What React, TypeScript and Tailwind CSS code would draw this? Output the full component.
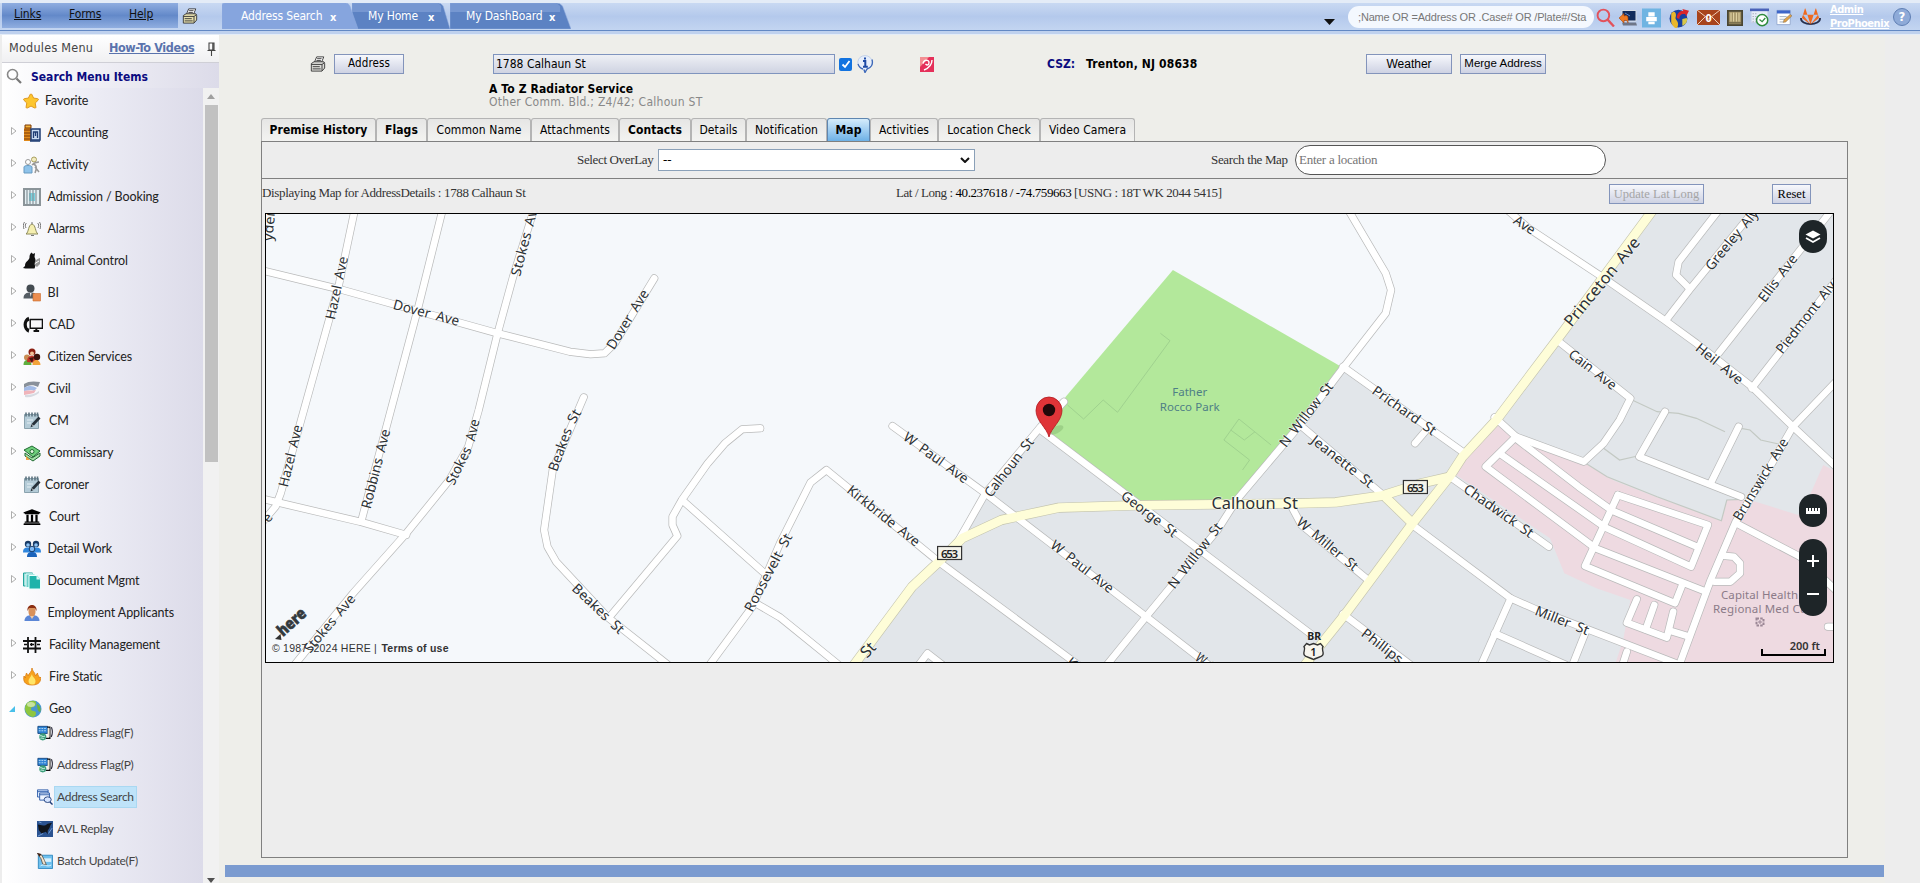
import React from "react";
import { FaStar, FaGitlab, FaUniversity } from "react-icons/fa";

/* ------------------------------------------------------------------ map */

const TILES: Record<string, { x: number; s: number }> = {
  A: { x: 260, s: 2.904 },
  B: { x: 780, s: 2.8 },
  C: { x: 1300, s: 2.8 },
};

const toPoints = (src: string): [number, number][] =>
  src.split(" ").map((p) => {
    const t = TILES[p[0]];
    const [x, y] = p.slice(1).split(",").map(Number);
    return [t.x + x / t.s, 210 + y / 3];
  });

const toAttr = (src: string) => toPoints(src).map((p) => p.map((n) => n.toFixed(1)).join(",")).join(" ");

const STREETS = [
  "A275,0 A230,220 A60,850 A45,890 A0,945",
  "A530,0 A460,290 A295,930",
  "A795,0 A735,200 A690,370 A635,600 A605,710 A550,810 A425,970 A270,1150 A100,1365",
  "A0,180 A240,240 A690,370 A900,425 A960,433 A1000,430 A1030,400 A1145,205",
  "A0,865 A290,935 A425,975",
  "A940,562 A850,780 A825,960 A835,1010 A860,1055 A1010,1222 A1185,1365",
  "A1453,655 A1400,658 A1350,700 A1300,760 A1225,870 A1198,920 A1198,945 A1212,978 A1020,1215",
  "A1228,872 A1460,1085",
  "A1440,1180 B0,1222 B165,1365",
  "A1305,1365 A1430,1190 B0,1000 B85,818 B130,780 B450,1060 B835,1365",
  "B795,575 B730,650 B575,850 B530,935 B490,1010",
  "B315,648 B575,850 B1025,1220 B1200,1365",
  "B730,660 B1490,1275",
  "C130,-10 C240,190 C255,240 C240,310 C120,475 B1456,645 B1280,868 B1225,960 B1025,1220 B915,1365",
  "C120,470 C455,725",
  "C350,665 C322,700",
  "B1456,645 C240,862",
  "B1430,885 B1460,945 C185,1105",
  "C315,945 C590,1165 C660,1198 C1065,1365",
  "C420,800 C697,1010",
  "C120,1212 C310,1365",
  "C590,1165 C507,1365",
  "C545,1270 C745,1365",
  "C800,1265 C763,1365",
  "C915,1325 C903,1365",
  "C570,-10 C640,55 C845,200 C1020,330 C1110,400 C1265,530 C1380,650 C1505,775",
  "C725,395 C925,565 C895,630 C850,700 C795,755 C605,680 C545,622",
  "C1025,330 C1090,240 C1280,-10",
  "C1090,235 C1053,195 C1060,155 C1180,-10",
  "C1172,430 C1500,-15",
  "C1265,535 C1505,205",
  "C1505,510 C1380,650 C1300,800 C1220,935 C1150,1110 C1062,1365",
  "C1022,605 C950,740 C1235,860",
  "C1228,650 C1150,820",
  "C605,680 C520,770 C815,1005",
  "C565,735 C845,945",
  "C610,690 C780,830 C865,895",
  "C890,855 C1142,945 C1095,1070 C850,950",
  "C870,900 C1112,1010",
  "C890,855 C798,1068 C1050,1180 C1072,1120",
  "C820,1012 C1130,1142",
  "C1185,1037 C1215,1040 C1232,1060 C1232,1090 C1205,1115 C1160,1115",
  "C943,1168 C915,1238 C1027,1283 C1045,1205",
  "C992,1185 C968,1258",
  "C1035,1262 C1090,1280",
  "C1222,940 C1400,1040 C1505,1145",
  "C1478,1250 C1510,1250",
  "B385,1370 B413,1330 B455,1365",
];

const MAIN_ROADS = [
  "C995,-10 C740,360 C550,630 C455,740 C420,798 C315,940 C125,1215 C50,1315 C10,1370",
  "C420,800 C340,820 C230,857 C100,877 C0,880 B1000,886 B780,893 B620,930 B510,985 B450,1050 B370,1130 B205,1368",
  "C240,862 C315,940",
];

const PATHS = [
  "C930,570 C1000,605 C1060,610 C1110,625 C1190,665",
  "C1235,655 C1260,660 C1290,690 C1340,702",
  "C850,715 C895,750 C945,738",
  "C800,760 C860,800 C1000,860 C1180,932 C1195,870 C1240,868",
];

const PARK_LINES = [
  "B1065,370 B1092,392 B945,607 B905,570 B850,627 B805,585",
  "B1375,705 B1285,627 B1243,690 B1315,750 B1295,780",
  "B1262,660 B1300,690 B1330,665",
];

type Label = [string, string, number?];
const LABELS: Label[] = [
  ["yder", "A22,92 A30,2"],
  ["Hazel Ave", "A203,328 A242,140"],
  ["Hazel Ave", "A67,830 A110,645"],
  ["Robbins Ave", "A307,895 A365,658"],
  ["Stokes Ave", "A741,197 A798,-25"],
  ["Stokes", "A551,822 A603,712"],
  ["Ave", "A610,692 A624,628"],
  ["Stokes Ave", "A135,1322 A268,1158"],
  ["Dover Ave", "A388,282 A578,334"],
  ["Dover Ave", "A1016,414 A1119,242"],
  ["Beakes", "A849,782 A893,655"],
  ["St", "A902,636 A922,600"],
  ["Beakes St", "A913,1128 A1052,1264"],
  ["Roosevelt St", "A1417,1202 A1535,973"],
  ["W Paul Ave", "B350,676 B524,810"],
  ["Kirkbride Ave", "B193,835 B387,1000"],
  ["Calhoun St", "B580,856 B702,688"],
  ["W Paul Ave", "B763,1000 B930,1140"],
  ["George St", "B960,852 B1108,972"],
  ["N Willow St", "B1094,1130 B1230,943"],
  ["N Willow St", "B1406,706 B1540,522"],
  ["Calhoun St", "B1208,880 B1450,880", 16],
  ["W Miller St", "C-4,930 C158,1074"],
  ["Jeanette St", "C36,685 C202,824"],
  ["St", "B232,1335 B260,1303", 16],
  ["Kirk", "B808,1350 B865,1400"],
  ["W Paul", "B1168,1337 B1250,1405"],
  ["Prichard St", "C207,537 C378,666"],
  ["Chadwick St", "C463,832 C650,973"],
  ["Princeton Ave", "C748,343 C942,88", 16],
  ["Cain Ave", "C757,427 C882,530"],
  ["Heil Ave", "C1113,408 C1236,514"],
  ["Greeley Aly", "C1142,175 C1275,2"],
  ["Ellis Ave", "C1291,271 C1384,138"],
  ["Piedmont Aly", "C1340,425 C1492,218"],
  ["Ave", "C602,26 C656,63"],
  ["Brunswick Ave", "C1222,928 C1357,688"],
  ["Miller St", "C660,1200 C808,1262"],
  ["Phillips", "C177,1264 C284,1352"],
];

function StreetLabel({ text, line, size = 13.8 }: { text: string; line: string; size?: number }) {
  const [[x1, y1], [x2, y2]] = toPoints(line);
  const angle = (Math.atan2(y2 - y1, x2 - x1) * 180) / Math.PI;
  return (
    <text
      transform={`translate(${x1.toFixed(1)} ${y1.toFixed(1)}) rotate(${angle.toFixed(1)})`}
      dy="0.35em"
      fontSize={size}
      wordSpacing="3"
      textLength={Math.hypot(x2 - x1, y2 - y1).toFixed(1)}
      lengthAdjust="spacingAndGlyphs"
    >
      {text}
    </text>
  );
}

function RouteShield({ x, y }: { x: number; y: number }) {
  return (
    <g>
      <rect x={x - 12} y={y - 6.5} width="24" height="13" fill="#f4f3ea" stroke="#333" strokeWidth="1.2" />
      <text x={x} y={y + 4.5} fontSize="11.5" textAnchor="middle" fontWeight="600" textLength="17">653</text>
    </g>
  );
}

function StreetMap() {
  return (
    <svg viewBox="266 214 1567 448" className="block h-full w-full font-['Noto_Sans','Open_Sans',sans-serif]">
      <rect x="260" y="210" width="1580" height="460" fill="#f5f8fb" />
      <polygon
        points={toAttr("B730,665 B575,850 B515,960 B440,1050 B365,1130 B200,1370 C1510,1370 C1510,-10 C985,-10 C740,360 C455,730 C125,470")}
        fill="#e2e6ea"
      />
      <polygon
        points={toAttr("C555,635 C640,690 C800,762 C880,812 C1000,862 C1180,932 C1195,870 C1260,870 C1395,915 C1430,850 C1465,765 C1510,790 C1510,1370 C880,1370 C905,1290 C925,1170 C830,1135 C740,1090 C700,985 C430,790")}
        fill="#eedae1"
      />
      <polygon points={toAttr("B1100,180 C112,468 B1280,870 B1010,872 B750,665 B800,560")} fill="#b3e89b" />
      <g fill="none" stroke="#a0d28f" strokeWidth="1">
        {PARK_LINES.map((p) => <polyline key={p} points={toAttr(p)} />)}
      </g>
      <g fill="none" stroke="#c3c9c3" strokeWidth="1.2">
        {PATHS.map((p) => <polyline key={p} points={toAttr(p)} />)}
      </g>
      <g fill="none" stroke="#b9baba" strokeWidth="8" strokeLinecap="round" strokeLinejoin="round">
        {STREETS.map((p) => <polyline key={p} points={toAttr(p)} />)}
      </g>
      <g fill="none" stroke="#c4c4ae" strokeWidth="10" strokeLinejoin="round">
        {MAIN_ROADS.map((p) => <polyline key={p} points={toAttr(p)} />)}
      </g>
      <g fill="none" stroke="#ffffff" strokeWidth="6.6" strokeLinecap="round" strokeLinejoin="round">
        {STREETS.map((p) => <polyline key={p} points={toAttr(p)} />)}
      </g>
      <g fill="none" stroke="#fefdd8" strokeWidth="8.8" strokeLinejoin="round">
        {MAIN_ROADS.map((p) => <polyline key={p} points={toAttr(p)} />)}
      </g>
      <g fill="#2c3134" stroke="#ffffff" strokeOpacity="0.6" strokeWidth="1.4" paintOrder="stroke">
        {LABELS.map(([t, l, s]) => <StreetLabel key={t + l} text={t} line={l} size={s} />)}
        <text x="264" y="522" fontSize="13.5" transform="rotate(-55 268 518)">e</text>
      </g>
      <g fill="#4f7f86" fontSize="11.5" textAnchor="middle">
        <text x="1189.7" y="396" textLength="35">Father</text>
        <text x="1189.7" y="411" textLength="60">Rocco Park</text>
      </g>
      <g fill="#8b7a88" fontSize="11.5">
        <text x="1721" y="598.5" textLength="77">Capital Health</text>
        <text x="1713" y="613" textLength="96">Regional Med Ctr</text>
        <path d="M1756.5 618.5h7v7h-7z" fill="#eedae1" stroke="#9b8796" strokeWidth="2" strokeDasharray="2.5 1.2" />
        <path d="M1760 620v4M1758 622h4" stroke="#9b8796" strokeWidth="1" />
      </g>
      <g fill="#222">
        <RouteShield x={949.6} y={553} />
        <RouteShield x={1415.4} y={487} />
        <text x="1314.3" y="640" fontSize="10.5" fontWeight="700" textAnchor="middle">BR</text>
        <path
          d="M1306.500 643.500l3 1.500 4-1.500 4 1.500 3-1.500 2.500 3c-2 3 1 5 0 8-1 3-7 3-9.500 5-2.500-2-8.500-2-9.500-5-1-3 2-5 0-8z"
          fill="#f7f5ee"
          stroke="#333"
          strokeWidth="1.4"
        />
        <text x="1313.3" y="656" fontSize="11" fontWeight="600" textAnchor="middle">1</text>
      </g>
      <ellipse cx="1056" cy="430" rx="8" ry="3.5" fill="#6a9a5a" opacity="0.3" transform="rotate(-25 1056 430)" />
      <path d="M1049 437c-2-9-13-16-13-26.500a13 13.500 0 0 1 26 0c0 10.500-11 17.500-13 26.500z" fill="#df3438" stroke="#b3191f" strokeWidth="0.8" />
      <circle cx="1049" cy="410" r="6.2" fill="#20080a" />
      <path d="M275 639l5.500-5 1 6z" fill="#333" />
      <text
        transform="translate(283 637) rotate(-42)"
        fontSize="16"
        fontWeight="900"
        fill="#333a3e"
        stroke="#333a3e"
        strokeWidth="0.6"
        textLength="33"
        lengthAdjust="spacingAndGlyphs"
      >
        here
      </text>
      <text x="272" y="652" fontSize="10.5" fill="#333" fontFamily="Liberation Sans">
        <tspan textLength="108">© 1987–2024 HERE | </tspan>
        <tspan x="381.5" fontWeight="700" textLength="67">Terms of use</tspan>
      </text>
    </svg>
  );
}

function MapControls() {
  return (
    <>
      <div className="absolute top-[6px] right-[6px] flex h-[33px] w-7 items-center justify-center rounded-full bg-[#1e2528]">
        <svg viewBox="0 0 16 14" className="h-3.5 w-4">
          <path d="M8 0.500l7.500 4L8 8.500 0.500 4.500z" fill="#fff" />
          <path d="M1 8l7 4 7-4" fill="none" stroke="#fff" strokeWidth="1.8" />
        </svg>
      </div>
      <div className="absolute top-[280px] right-[6px] flex h-[33px] w-7 items-center justify-center rounded-full bg-[#1e2528]">
        <svg viewBox="0 0 16 8" className="h-2 w-4">
          <path d="M1 1v6h14V1z" fill="#fff" />
          <path d="M3.500 0v4M6.500 0v4M9.500 0v4M12.500 0v4" stroke="#1e2528" />
        </svg>
      </div>
      <div className="absolute top-[325px] right-[6px] flex h-[77px] w-7 flex-col items-center justify-between rounded-[14px] bg-[#1e2528] py-4">
        <svg viewBox="0 0 12 12" className="h-3 w-3"><path d="M6 0v12M0 6h12" stroke="#fff" strokeWidth="2" /></svg>
        <svg viewBox="0 0 12 12" className="h-3 w-3"><path d="M0 6h12" stroke="#fff" strokeWidth="2" /></svg>
      </div>
      <div className="absolute right-[7px] bottom-[6px] flex h-[7px] w-[65px] items-end justify-end border-x-2 border-b-2 border-black pr-1 pb-[3px] font-['Noto_Sans',sans-serif] text-[11px] leading-[11px] font-semibold text-[#333]">
        200 ft
      </div>
    </>
  );
}

/* ---------------------------------------------------------------- icons */

function Svg({ children, className = "h-[18px] w-[18px]" }: { children: React.ReactNode; className?: string }) {
  return <svg viewBox="0 0 18 18" className={`${className} shrink-0`}>{children}</svg>;
}

const Printer = ({ tone = "#e9e6cf" }: { tone?: string }) => (
  <Svg className="h-4 w-4">
    <path d="M5 7l2.500-6h8l-2.500 6z" fill="#fff" stroke="#333" />
    <path d="M1.500 8.500l3-2h11l1 2v5l-3 3.500h-12z" fill={tone} stroke="#333" />
    <path d="M1.500 9.500h12v7M13.500 9.500l3-2M3 12h8M3 14.500h9M8 3h5M7.200 5h5" stroke="#333" fill="none" />
  </Svg>
);

const Notepad = () => (
  <Svg>
    <path d="M1.500 2.500h14v14h-14z" fill="#b4cbd7" stroke="#8aa2ae" />
    <path d="M3 0.500v4M6 0.500v4M9 0.500v4M12 0.500v4M14.500 0.500v4" stroke="#5d7480" strokeWidth="1.6" />
    <path d="M4 8h6M4 11h4" stroke="#e6f0f5" />
    <path d="M7.500 15.500l1-3.500 7-7.500 2 2-7 7.500z" fill="#27313a" />
    <path d="M9 12.500l1.500 1.500" stroke="#fff" />
  </Svg>
);

const AddressFlag = () => (
  <Svg className="h-4 w-4">
    <path d="M1 1.500h11v8H1z" fill="#2d83d4" stroke="#12457f" />
    <path d="M2 4h9M2 6.500h9" stroke="#bfe0fa" strokeDasharray="2 1" />
    <path d="M11.500 2.500h3V15H10" fill="none" stroke="#111" strokeWidth="1.4" />
    <path d="M12 3.500h2v10h-2z" fill="#f4ead6" />
    <path d="M16.300 2.500c1.200 3.500 1.200 8-.3 11" fill="none" stroke="#223" strokeWidth="1.2" />
    <circle cx="6.500" cy="13.300" r="4" fill="#3c9d7a" />
    <path d="M3 12.500c2-2 3 2 6 0M4 15c2-1 3 1 4 0" stroke="#e2fff4" fill="none" />
  </Svg>
);

const ICONS: Record<string, React.ReactNode> = {
  favorite: <FaStar className="h-4 w-4 fill-[#fdc62f] stroke-[#d98c10] stroke-[30px]" />,
  accounting: (
    <Svg>
      <path d="M1 4h7v13H1z" fill="#e08a1c" />
      <path d="M2 1h6v3H2zM1 6h7M1 9h7M1 12h7M1 15h7" stroke="#7d3a06" fill="#f5b53c" />
      <path d="M8 5h9v11H8z" fill="#c9dcf2" stroke="#1e3c73" strokeWidth="1.5" />
      <path d="M10.500 14V8h4v6M12.500 8v4M7 17h10" stroke="#1e3c73" fill="none" strokeWidth="1.3" />
    </Svg>
  ),
  activity: (
    <Svg>
      <circle cx="5" cy="6" r="2.500" fill="#fff" stroke="#999" />
      <circle cx="11" cy="3.500" r="2.500" fill="#f3ecc0" stroke="#a99f60" />
      <path d="M1 17v-6c0-2 8-2 8 0v6z" fill="#8fc3ea" stroke="#6699c0" />
      <path d="M9 9c2-2 4-3 7-3M10 8c4 1 4 4 2 9M12 11l4 5" stroke="#999" fill="none" strokeWidth="1.5" />
    </Svg>
  ),
  admission: (
    <Svg>
      <path d="M1 1h16v16H1z" fill="#e3eef2" stroke="#8b9499" strokeWidth="2" />
      <path d="M6 5h6v8H6z" fill="#79d3e0" />
      <path d="M4 1v16M7 1v16M10 1v16M13 1v16" stroke="#87949a" strokeWidth="1.2" />
    </Svg>
  ),
  alarms: (
    <Svg>
      <path d="M3 14c3-2 2-9 6-10 4 1 3 8 6 10z" fill="#f5efb0" stroke="#8d8a5a" />
      <path d="M8 15.500h3M9 2v2M3.500 3C2 4 2 6 3 8M1.500 2C0 4 0 7 1 9M14.500 3c1.500 1 1.500 3 .5 5M16.500 2c1.500 2 1.500 5 .5 7" stroke="#777" fill="none" />
    </Svg>
  ),
  animal: (
    <Svg>
      <path d="M8.500 0.500l1.500 1.500 2-1-.5 4c1.500 2 1.500 8 0 11.500H2.500L0 16l2-2c0-5 4-5 4.500-8.500C6.500 3 7 2 8.500 0.500z" fill="#111" />
      <path d="M11.500 13c0-4 2-6 5.500-7v6l-3 3z" fill="#9a9a9a" />
      <path d="M12 11.500l4-2.500" stroke="#fff" />
    </Svg>
  ),
  bi: (
    <Svg>
      <circle cx="7.500" cy="4.500" r="4" fill="#444b51" />
      <path d="M0.500 14.500c0-5 3-6 7-6s6 1 6 6z" fill="#555d64" />
      <path d="M7 9l.7 4 .8-4z" fill="#fff" />
      <path d="M10 9.500h7.500v7.500H10z" fill="#ec8d4f" stroke="#c96b2d" strokeWidth="0.6" />
    </Svg>
  ),
  cad: (
    <Svg className="h-5 w-5">
      <path d="M5 1.500C-1 4 -1 13 5 16l.8-3.500-1.800-1c-.8-2-.8-4 0-5.500l1.800-1z" fill="#111" />
      <path d="M6.500 4h11v8h-11z" fill="none" stroke="#111" strokeWidth="1.3" />
      <path d="M9.500 14.500h5M12 12v2" stroke="#111" strokeWidth="1.8" />
    </Svg>
  ),
  citizen: (
    <Svg>
      <circle cx="4" cy="9.500" r="3" fill="#c98d54" />
      <path d="M0.500 17c0-4 2-5 4-5s4 2 4 5z" fill="#5fae3e" />
      <circle cx="9" cy="4" r="3.500" fill="#8b1f12" />
      <circle cx="9" cy="5.500" r="2" fill="#f2c49a" />
      <path d="M4 14c0-5 2-6 5-6s6 2 6 7z" fill="#c4342a" />
      <circle cx="14" cy="9" r="3.200" fill="#3a130d" />
      <path d="M9.500 17c0-4 2-5 4-5s4 2 4 5z" fill="#f2a33a" />
      <path d="M6 10l3 5 2-6z" fill="#4a1710" />
    </Svg>
  ),
  civil: (
    <Svg>
      <path d="M1 4c4-3 10-3 16-2l-2 5C10 4 5 5 1 8z" fill="#89909a" />
      <path d="M1 8c5-3 9-2 13 0l-3 3c-3-2-6 0-10 0z" fill="#a3bbe6" />
      <path d="M1 11c5-1 8 0 12-1l-2 3c-3 1-6 1-10 2z" fill="#f0b4ba" />
      <path d="M2 15c5 0 10-1 14-4v2c-4 3-9 5-14 4z" fill="#d7dbe2" />
    </Svg>
  ),
  cm: <Notepad />,
  commissary: (
    <Svg>
      <path d="M1 6l8-4 8 5-7 6z" fill="#6fcf7c" stroke="#216b32" />
      <path d="M2 9l7 5 8-5v3l-7 5-8-5z" fill="#a4e0a7" stroke="#216b32" />
      <circle cx="9" cy="7.500" r="2" fill="#e4f7e0" stroke="#216b32" />
      <path d="M3 12l4 4H3z" fill="#f0a64a" />
    </Svg>
  ),
  court: <FaUniversity className="h-[18px] w-[18px] text-black" />,
  detail: (
    <Svg>
      <circle cx="5" cy="4" r="3.200" fill="#173a66" />
      <circle cx="13" cy="4" r="3.200" fill="#173a66" />
      <circle cx="5" cy="5" r="1.800" fill="#8fc4f5" />
      <circle cx="13" cy="5" r="1.800" fill="#8fc4f5" />
      <path d="M0 12.500c0-5 3-5 5-5s5 0 5 5z" fill="#2f86dd" />
      <path d="M8 12.500c0-5 3-5 5-5s5 0 5 5z" fill="#2f86dd" />
      <circle cx="9" cy="9" r="2.800" fill="#7fb8f2" stroke="#173a66" />
      <path d="M4 17c0-4 2-5 5-5s5 1 5 5z" fill="#1b63bb" />
    </Svg>
  ),
  document: (
    <Svg>
      <path d="M0.500 1h9v13h-9z" fill="#9fe0dc" stroke="#23a59d" />
      <path d="M3 2h9v13.500H3z" fill="#6bcfc9" stroke="#eafffd" />
      <path d="M6 3.500h8l3.500 3.500v10H6z" fill="#1fb3aa" stroke="#eafffd" />
      <path d="M13.500 3.500V7.500h4z" fill="#d6f5f3" />
    </Svg>
  ),
  employment: (
    <Svg>
      <path d="M1.500 17c0-4 3-6 7.500-6s7.500 2 7.500 6z" fill="#5b86d6" />
      <path d="M5.500 4h7v4c0 6-7 6-7 0z" fill="#d9915a" />
      <path d="M4.500 7c-1-8 10-8 9 0l-1.500-3H6z" fill="#8c2e12" />
      <path d="M7 12l2 3 2-3z" fill="#f0c9a4" />
    </Svg>
  ),
  facility: (
    <Svg>
      <path d="M5 1v16M12.500 1v16M0 5h18M0 12.500h18" stroke="#111" strokeWidth="1.8" />
      <path d="M1 8.500h3M7 8.500h4M14 8.500h3M8.500 7v3" stroke="#111" strokeWidth="1.4" />
    </Svg>
  ),
  fire: (
    <Svg>
      <path d="M9 0c0 3 3 4 3.500 8l2-3c0 2 1.500 3 2 5l1-1c.5 4-1 8-8.500 8S0 13 1 8l1.500 2C2 8 3 7 3.500 5l1.500 3c1-3 4-4 4-8z" fill="#f7a21d" stroke="#d97c12" strokeWidth="0.8" />
      <path d="M9 6c0 3 3.500 4 3.500 7S11 16.500 9 16.500 5.500 15.500 5.500 13 8 9 9 6z" fill="#ffe568" />
    </Svg>
  ),
  geo: (
    <Svg>
      <circle cx="9" cy="9" r="8.500" fill="#4a97cf" />
      <path d="M3 3c4-3 10-3 9 1s-5 2-5 5 5 1 5 4-2 4-4 4C1 15-1 8 3 3z" fill="#8ec63f" />
      <path d="M13 4c4 2 4 6 3 8-2 0-3-4-3-8z" fill="#6db33a" />
      <ellipse cx="7" cy="4.500" rx="4" ry="2.500" fill="#fff" opacity="0.5" />
    </Svg>
  ),
  search: (
    <Svg className="h-4 w-4">
      <path d="M0.500 1h12v8h-12z" fill="#dcebff" stroke="#2455a5" />
      <path d="M3 4.500h11v8H3z" fill="#eef5ff" stroke="#2455a5" />
      <path d="M0.500 3h12M3 6.500h11" stroke="#2455a5" />
      <ellipse cx="12" cy="12" rx="4" ry="3.200" fill="#d5e4ff" stroke="#1d3c78" />
      <path d="M14.500 14.500l3 3" stroke="#1d3c78" strokeWidth="1.6" />
    </Svg>
  ),
  avl: (
    <Svg className="h-4 w-4">
      <path d="M0 0h18v18H0z" fill="#2b5391" />
      <path d="M1 4c4 1 8 2 11-1l5-1-2 3-1 3-2 3v4l-2-3-5 2-3-4z" fill="#10151d" />
      <path d="M1 17l6-3M13 14l4-6M2 1l3 1" stroke="#7aa3da" />
    </Svg>
  ),
  batch: (
    <Svg className="h-4 w-4">
      <path d="M1.500 2.500h16v15h-16z" fill="#6fc0ee" stroke="#2b86bf" />
      <path d="M6 6h10v4H6z" fill="#d8f1fd" />
      <path d="M0.500 0.500l5 2 3 6 2 5-4-1-2-6z" fill="#f1e3cf" stroke="#3b2b1d" strokeWidth="0.7" />
      <path d="M0 0l5 1-2 3z" fill="#3b1d12" />
      <path d="M4 14.500c4-3 7 2 12-1" stroke="#eafaff" fill="none" />
    </Svg>
  ),
};

type Item = { label: string; icon: string; arrow?: boolean; wide?: boolean; near?: boolean };
const MODULES: Item[] = [
  { label: "Favorite", icon: "favorite", near: true },
  { label: "Accounting", icon: "accounting", arrow: true },
  { label: "Activity", icon: "activity", arrow: true },
  { label: "Admission / Booking", icon: "admission", arrow: true },
  { label: "Alarms", icon: "alarms", arrow: true },
  { label: "Animal Control", icon: "animal", arrow: true },
  { label: "BI", icon: "bi", arrow: true },
  { label: "CAD", icon: "cad", arrow: true, wide: true },
  { label: "Citizen Services", icon: "citizen", arrow: true },
  { label: "Civil", icon: "civil", arrow: true },
  { label: "CM", icon: "cm", arrow: true, wide: true },
  { label: "Commissary", icon: "commissary", arrow: true },
  { label: "Coroner", icon: "cm", near: true },
  { label: "Court", icon: "court", arrow: true, wide: true },
  { label: "Detail Work", icon: "detail", arrow: true },
  { label: "Document Mgmt", icon: "document", arrow: true },
  { label: "Employment Applicants", icon: "employment" },
  { label: "Facility Management", icon: "facility", arrow: true, wide: true },
  { label: "Fire Static", icon: "fire", arrow: true, wide: true },
];

const GEO_ITEMS = [
  { label: "Address Flag(F)", icon: <AddressFlag /> },
  { label: "Address Flag(P)", icon: <AddressFlag /> },
  { label: "Address Search", icon: ICONS.search, active: true },
  { label: "AVL Replay", icon: ICONS.avl },
  { label: "Batch Update(F)", icon: ICONS.batch },
];

/* -------------------------------------------------------------- sidebar */

function Sidebar() {
  return (
    <aside className="ml-0.5 flex w-[217px] shrink-0 flex-col overflow-hidden bg-[#f1f1f1]">
      <div className="flex h-[27px] shrink-0 items-center bg-linear-to-b from-white to-[#f0f0f2] pl-[7px] font-['DejaVu_Sans_Condensed','DejaVu_Sans',sans-serif] text-[12.5px] whitespace-nowrap">
        <span className="w-[100px] tracking-[0.25px] text-[#444]">Modules Menu</span>
        <span className="w-[98px] font-bold tracking-[-0.4px] text-[#5a73ad] underline">How-To Videos</span>
        <svg viewBox="0 0 9 14" className="h-3.5 w-[9px]">
          <path d="M2 1h5v7H2zM0.500 8.500h8M4.500 8.500V14" fill="none" stroke="#444" strokeWidth="1.1" />
          <path d="M6 1v7" stroke="#444" strokeWidth="1.5" />
        </svg>
      </div>
      <div className="flex h-[26px] shrink-0 items-center border-t border-[#cfcfd6] bg-linear-to-r from-white to-[#dcdbe9] pl-1">
        <svg viewBox="0 0 16 16" className="h-4 w-4">
          <circle cx="6.500" cy="6.500" r="5" fill="none" stroke="#888" strokeWidth="1.6" />
          <path d="M10.500 10.500l4.500 4.500" stroke="#777" strokeWidth="2.2" />
        </svg>
        <span className="mt-0.5 ml-[9px] font-['DejaVu_Sans_Condensed','DejaVu_Sans',sans-serif] text-[12px] font-bold whitespace-nowrap text-[#0b0b80]">
          Search Menu Items
        </span>
      </div>
      <div className="flex min-h-0 flex-1">
        <nav className="w-[201px] shrink-0 bg-linear-to-r from-white via-[#ebebf4] to-[#dcdbe9] font-['Lato',sans-serif] text-[12.5px] tracking-[-0.12px] text-[#222]">
          <ul className="-mt-[3px]">
            {MODULES.map((m) => (
              <li key={m.label} className="flex h-8 items-center pl-[9px]">
                <span className="w-3 shrink-0">
                  {m.arrow && (
                    <svg viewBox="0 0 6 8" className="mb-1 h-2 w-1.5"><path d="M0.500 0.500L5 4 0.500 7.500z" fill="#fff" stroke="#999" strokeWidth="0.8" /></svg>
                  )}
                </span>
                <span className={`flex shrink-0 ${m.near ? "w-[22px]" : m.wide ? "w-[26px]" : "w-[24.5px]"}`}>{ICONS[m.icon]}</span>
                <span className="whitespace-nowrap">{m.label}</span>
              </li>
            ))}
            <li>
              <div className="flex h-8 items-center pl-[7px]">
                <svg viewBox="0 0 6 6" className="mr-[9px] h-1.5 w-1.5"><path d="M6 0v6H0z" fill="#49c0ea" /></svg>
                <span className="w-[25px]">{ICONS.geo}</span>
                <span>Geo</span>
              </div>
              <ul className="-mt-2 text-[12px] tracking-[-0.28px] text-[#444]">
                {GEO_ITEMS.map((g) => (
                  <li key={g.label} className="flex h-8 items-center pl-[35px]">
                    {g.icon}
                    <span className={`ml-px border px-0.5 py-0.5 leading-4 whitespace-nowrap ${g.active ? "border-[#a9d8f2] bg-[#bfe3f9]" : "border-transparent"}`}>
                      {g.label}
                    </span>
                  </li>
                ))}
              </ul>
            </li>
          </ul>
        </nav>
        <div className="flex w-4 flex-col items-center">
          <span className="flex h-[17px] items-center"><svg viewBox="0 0 8 5" className="h-[5px] w-2"><path d="M0 5l4-5 4 5z" fill="#a0a0a0" /></svg></span>
          <span className="h-[357px] w-[13px] bg-[#c1c1c1]" />
          <span className="mt-auto"><svg viewBox="0 0 8 5" className="h-[5px] w-2"><path d="M0 0l4 5 4-5z" fill="#505050" /></svg></span>
        </div>
      </div>
    </aside>
  );
}

/* -------------------------------------------------------------- top bar */

function WindowTab({ label, active, className, close = "w-[22px]" }: { label: string; active?: boolean; className: string; close?: string }) {
  return (
    <div className={`relative flex h-[26px] items-center text-[12px] tracking-[-0.15px] whitespace-nowrap text-white ${className}`}>
      <svg viewBox="0 0 100 26" preserveAspectRatio="none" className="absolute inset-0 h-full w-full">
        <path d={active ? "M0 26V2q0-2 2-2H91q2 0 3 3L100 26z" : "M0 26V0H88q3 0 5 3L100 26z"} fill={active ? "#86a5de" : "#5c82c3"} stroke="#8fabdf" strokeWidth="0.5" />
        {!active && <path d="M0 0H88l3 3v6H0z" fill="#87a5da" opacity="0.6" />}
      </svg>
      <span className="relative flex-1">{label}</span>
      <span className={`relative mt-1 text-[11px] font-bold ${close}`}>x</span>
    </div>
  );
}

function TopBar() {
  return (
    <header className="flex h-[35px] shrink-0 flex-col bg-[#e4ecf7] pt-[3px] font-['DejaVu_Sans_Condensed','DejaVu_Sans',sans-serif]">
      <div className="flex h-7 items-start border-b border-[#6288c4] bg-linear-to-b from-[#c9d9f2] via-[#b4c9ec] to-[#c3d5f1]">
        <div className="ml-0.5 flex h-[25px] w-[176px] items-center bg-linear-to-b from-[#8fade0] via-[#6389c9] to-[#90aee0] pb-[3px] text-[12px] tracking-[-0.1px] text-[#111] underline">
          <span className="w-[55px] pl-3">Links</span>
          <span className="w-[60px] pl-3">Forms</span>
          <span className="pl-3">Help</span>
        </div>
        <div className="ml-1 flex h-[25px] w-10 items-center"><Printer tone="#e6dfae" /></div>
        <WindowTab active label="Address Search" className="z-10 w-[136px] pl-[19px]" close="w-7" />
        <WindowTab label="My Home" className="-ml-1.5 w-[98px] pl-4" />
        <WindowTab label="My DashBoard" className="w-[121px] pl-4" />
        <div className="ml-auto flex h-[27px] items-center pr-[9px]">
          <svg viewBox="0 0 11 6" className="mt-2.5 mr-[13px] h-1.5 w-[11px]"><path d="M0 0h11L5.500 6z" fill="#111" /></svg>
          <div className="flex h-[22px] w-[246px] items-center overflow-hidden rounded-full bg-[#f4f8fe] px-2.5 pt-0.5 font-['Liberation_Sans',sans-serif] text-[11px] tracking-[-0.18px] whitespace-nowrap text-[#777]">
            ;Name OR =Address OR .Case# OR /Plate#/Sta
          </div>
          <div className="flex items-center pt-0.5">
            <Svg className="mr-1 ml-0.5 h-[19px] w-[19px]"><circle cx="7" cy="7" r="5.500" fill="none" stroke="#e2525b" strokeWidth="1.8" /><path d="M11 11l6 6.500" stroke="#e2525b" strokeWidth="2.2" /></Svg>
            <Svg className="mr-[5px] h-[18px] w-[18px]">
              <path d="M3 1.500h14v10.500H3z" fill="#122c5c" stroke="#d6dce4" />
              <path d="M6 4l5 3" stroke="#5c86c9" />
              <path d="M3 13.500h14l1 3H4z" fill="#6e7688" />
              <path d="M0 9l5-4.500v2.500c3-1 4 0 4 2v5c0-2-2-3-4-2.500V14z" fill="#f07a22" stroke="#a8450c" strokeWidth="0.6" />
            </Svg>
            <Svg className="mr-2 h-5 w-[19px]">
              <path d="M0 0h18v18H0z" fill="#6fb4e2" />
              <path d="M6 3.500h6v4H6zM4 8h10v4H4zM6 12.500h6v2.500H6z" fill="#fff" />
            </Svg>
            <Svg className="mr-2 h-5 w-5"><circle cx="8.500" cy="9.500" r="8" fill="#173fa0" /><path d="M2 5c3-4 5 0 4 3s3 3 2 8-5 0-6-3z" fill="#e8b62b" /><path d="M12 10l4-1c1 3-1 6-4 7z" fill="#d8c84a" /><path d="M7 9c0-5 4-7 6-6l-1-2 6 1.500-2.500 5-1-2C11 5 9 7 9.500 10z" fill="#d9252a" /></Svg>
            <svg viewBox="0 0 23 15" className="mr-[7px] h-[15px] w-[23px]">
              <path d="M0 0h23v15H0z" fill="#a8441c" />
              <path d="M0 0l11.500 9L23 0M0 15l8-8M23 15l-8-8" stroke="#f0d0b8" fill="none" />
              <text x="8.500" y="12" fontSize="10" fontWeight="700" fill="#fff">0</text>
            </svg>
            <Svg className="mr-[7px] h-[16px] w-[16px]"><path d="M1 1h16v16H1z" fill="#a39367" stroke="#4a4633" strokeWidth="2" /><path d="M4.500 3v10M7.500 3v10M10.500 3v10M13.500 3v10" stroke="#f1e5b5" /><path d="M2 14.500h14" stroke="#5d563c" /></Svg>
            <Svg className="mr-[7px] h-[19px] w-[19px]"><path d="M1 2h16v12H1z" fill="#e6ecf8" stroke="#c4cfe8" /><path d="M0 0.500h18v2.500H0z" fill="#4a62b8" /><path d="M3 5v9M5.500 5v9" stroke="#99a" strokeDasharray="1 1.5" /><circle cx="11.500" cy="11.500" r="5.300" fill="#fff" stroke="#2e8b3c" strokeWidth="1.4" /><path d="M9 11l2.500 2 3-3.500" stroke="#2e8b3c" fill="none" strokeWidth="1.2" /></Svg>
            <Svg className="mr-2 h-[17px] w-4"><path d="M1 1h15v16H1z" fill="#fff" stroke="#93a8d0" /><path d="M1 1h15v3.500H1z" fill="#3d66c9" /><path d="M4 8h8M4 11h6M4 14h4" stroke="#9ab" /><path d="M8 14.500l1-3 7-6 2 1.500-7 7z" fill="#e0a248" stroke="#6b5a48" strokeWidth="0.5" /></Svg>
            <span className="relative mr-[9px] flex h-[19px] w-[21px] justify-center">
              <svg viewBox="0 0 21 8" className="absolute bottom-0.5 left-0 h-2 w-[21px]"><path d="M1 1c-1 8 20 8 19 0" fill="none" stroke="#27314f" strokeWidth="1.8" /></svg>
              <FaGitlab className="relative h-[17px] w-[17px] text-[#ee6a20]" />
            </span>
          </div>
          <div className="w-[63px] text-[11px] leading-[14px] font-bold tracking-[-0.45px] text-white underline">
            Admin<br />ProPhoenix
          </div>
          <span className="flex h-[18px] w-[18px] items-center justify-center rounded-full border border-[#5f7fb4] bg-[#8eaad8] text-[13px] font-bold text-white">?</span>
        </div>
      </div>
      <div className="h-[3px] bg-[#bfd1ee]" />
    </header>
  );
}

/* --------------------------------------------------------------- content */

const BUTTON = "flex items-center justify-center border border-[#8394bb] bg-linear-to-b from-[#f7f8fc] to-[#ced2e3] whitespace-nowrap";

const TABS = [
  { label: "Premise History", width: "w-[115px]", bold: true },
  { label: "Flags", width: "w-[51px]", bold: true },
  { label: "Common Name", width: "w-[104px]" },
  { label: "Attachments", width: "w-[88px]" },
  { label: "Contacts", width: "w-[72px]", bold: true },
  { label: "Details", width: "w-[55px]" },
  { label: "Notification", width: "w-[81px]" },
  { label: "Map", width: "w-[43px]", bold: true, active: true },
  { label: "Activities", width: "w-[68px]" },
  { label: "Location Check", width: "w-[102px]" },
  { label: "Video Camera", width: "w-[95px]" },
];

function AddressHeader() {
  return (
    <section className="h-[83px] shrink-0 pt-[19px] text-[12px] whitespace-nowrap">
      <div className="flex h-5 items-center">
        <span className="ml-[91px] flex w-6"><Printer tone="#dcdcd8" /></span>
        <button className={`${BUTTON} h-5 w-[70px] text-[11.5px] tracking-[0.1px]`}>Address</button>
        <div className="ml-[89px] flex h-5 w-[342px] items-center border border-[#7f94be] bg-linear-to-b from-[#eef0f5] to-[#cfd3e2] pl-0.5">1788 Calhaun St</div>
        <span className="ml-1 flex h-[13px] w-[13px] items-center justify-center rounded-[2px] bg-[#1273e0]">
          <svg viewBox="0 0 10 10" className="h-2.5 w-2.5"><path d="M1.500 5.500l2.500 2.500 4.500-6" stroke="#fff" strokeWidth="1.8" fill="none" /></svg>
        </span>
        <svg viewBox="0 0 18 18" className="ml-1 h-[18px] w-[18px]">
          <path d="M9 0.500a8 7 0 0 1 2 13.500l-2 4-2-4A8 7 0 0 1 9 0.500z" fill="#e6eefb" stroke="#b5c5e4" strokeWidth="0.7" />
          <path d="M16 4.500c1.500 5-1 8.500-5 9.500l-2 3.500-1-3M2 9c1 3 3 4.500 5 5" fill="none" stroke="#3d68b8" strokeWidth="1.3" />
          <path d="M7 6h2.300v5.500M7 11.800h4.800M9 2.500v2" stroke="#1c49a5" strokeWidth="2" fill="none" />
        </svg>
        <svg viewBox="0 0 14 15" className="ml-[46px] h-[15px] w-3.5">
          <path d="M0 0h14v15H0z" fill="#e5305a" />
          <path d="M0 0h9L0 10z" fill="#f6a6a0" opacity="0.8" />
          <path d="M3 6.500c1-4.500 6-4 6-1s-2 3-3.500 1.500M12 3c0 5-3 8-8 10" fill="none" stroke="#fff" strokeWidth="1.4" />
        </svg>
        <span className="ml-[113px] w-[39px] font-bold text-[#0b0b80]">CSZ:</span>
        <span className="w-[280px] font-bold tracking-[0.15px]">Trenton, NJ 08638</span>
        <button className={`${BUTTON} h-5 w-[86px] font-['Liberation_Sans',sans-serif] text-[12px]`}>Weather</button>
        <button className={`${BUTTON} ml-2 h-5 w-[86px] font-['Liberation_Sans',sans-serif] text-[11.5px]`}>Merge Address</button>
      </div>
      <div className="ml-[270px] pt-[9px] leading-[13px]">
        <div className="text-[12px] font-bold tracking-[0.12px]">A To Z Radiator Service</div>
        <div className="text-[12px] tracking-[0.28px] text-[#888]">Other Comm. Bld.; Z4/42; Calhoun ST</div>
      </div>
    </section>
  );
}

function Content() {
  return (
    <main className="flex w-[1666px] shrink-0 flex-col bg-[#eeeeea] font-['DejaVu_Sans_Condensed','DejaVu_Sans',sans-serif]">
      <AddressHeader />
      <div className="ml-[42px] flex h-[23px] shrink-0">
        {TABS.map((t) => (
          <div
            key={t.label}
            className={`flex items-center justify-center rounded-t-[3px] border border-b-0 text-[12px] whitespace-nowrap ${t.width} ${t.bold ? "font-bold tracking-[0.05px]" : "tracking-[0.1px]"} ${
              t.active ? "border-[#5f86b0] bg-linear-to-b from-[#d5ecfb] to-[#6db1e6]" : "border-[#b4b4b4] bg-linear-to-b from-[#e6e6e5] to-[#f3f3f1]"
            }`}
          >
            {t.label}
          </div>
        ))}
      </div>
      <section className="ml-[42px] flex h-[717px] w-[1587px] shrink-0 flex-col border border-[#808080] bg-[#ededed] font-['Liberation_Serif',serif] text-[13px] tracking-[-0.35px] whitespace-nowrap text-[#333]">
        <div className="flex h-[37px] shrink-0 items-center border-b border-[#808080]">
          <span className="ml-[315px] w-[81px]">Select OverLay</span>
          <div className="flex h-[22px] w-[317px] items-center justify-between border border-[#8aa0b8] bg-white px-1 tracking-normal text-black">
            <span>--</span>
            <svg viewBox="0 0 10 6" className="h-1.5 w-2.5"><path d="M1 1l4 4 4-4" stroke="#111" strokeWidth="2" fill="none" /></svg>
          </div>
          <span className="ml-[236px] w-[84px]">Search the Map</span>
          <div className="flex h-[30px] w-[311px] items-center rounded-full border border-[#555] bg-white pl-[3px] tracking-[-0.25px] text-[#757575]">Enter a location</div>
        </div>
        <div className="flex h-[34px] shrink-0 items-center pb-[7px]">
          <span className="w-[634px]">Displaying Map for AddressDetails : 1788 Calhaun St</span>
          <span className="w-[713px] tracking-[-0.42px]">Lat / Long : <span className="text-black">40.237618 / -74.759663</span> [USNG : 18T WK 2044 5415]</span>
          <button className={`${BUTTON} mt-[3px] h-5 w-[95px] border-[#7f9db9] text-[12.5px] tracking-normal text-[#a5a5a5]`}>Update Lat Long</button>
          <button className={`${BUTTON} mt-[3px] ml-[68px] h-5 w-[39px] border-[#7f9db9] text-[12.5px] tracking-normal text-black`}>Reset</button>
        </div>
        <div className="relative ml-[3px] h-[450px] w-[1569px] shrink-0 overflow-hidden border border-black tracking-normal">
          <StreetMap />
          <MapControls />
        </div>
      </section>
      <div className="mt-[7px] ml-[6px] h-3 w-[1659px] shrink-0 bg-[#7b9bd0]" />
    </main>
  );
}

export default function App() {
  return (
    <div className="flex h-[883px] w-[1920px] flex-col overflow-hidden bg-[#ededed] text-black">
      <TopBar />
      <div className="flex min-h-0 flex-1">
        <Sidebar />
        <Content />
      </div>
    </div>
  );
}
